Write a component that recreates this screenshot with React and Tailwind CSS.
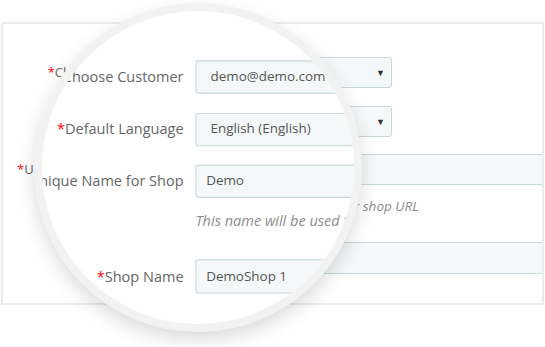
import React from "react";

function Label({ children, ghost }) {
  return (
    <div
      className={`w-[160px] shrink-0 text-right text-[#666] whitespace-nowrap ${
        ghost ? "text-[13.5px]" : "text-[13px]"
      }`}
    >
      <span className="text-[#f00]">*</span>
      {children}
    </div>
  );
}

function Select({ value }) {
  return (
    <div className="ml-[11px] w-[218px] h-full flex items-center justify-between rounded-[3px] border border-[#c8d7dc] bg-[#f5f8f9] pl-[13px] pr-[6px] text-[12.5px] text-[#555]">
      <span className="whitespace-nowrap">{value}</span>
      <span className="text-[9px] text-[#333]">▼</span>
    </div>
  );
}

function Input({ value }) {
  return (
    <div className="ml-[11px] w-[420px] h-full shrink-0 flex items-center rounded-[3px] border border-[#c8d7dc] bg-[#f5f8f9] pl-[9px] text-[12.5px] text-[#555] whitespace-nowrap">
      {value}
    </div>
  );
}

function ShopForm({ ghost }) {
  return (
    <div
      className={`mt-[21px] ml-[1px] w-[543px] h-[283px] border-2 overflow-hidden pt-[33px] ${
        ghost ? "border-transparent" : "border-[#ebebeb]"
      }`}
    >
      <div className="flex items-center h-[31px]">
        <Label ghost={ghost}>Choose Customer</Label>
        <Select value="demo@demo.com" />
      </div>
      <div className="flex items-center h-[31px] mt-[18px]">
        <Label ghost={ghost}>Default Language</Label>
        <Select value="English (English)" />
      </div>
      <div className="flex items-center h-[31px] mt-[17px]">
        <Label ghost={ghost}>Unique Name for Shop</Label>
        <Input value="Demo" />
      </div>
      <p className="ml-[171px] mt-[12px] leading-[18px] text-[13.5px] italic text-[#8c8c8c] whitespace-nowrap">
        This name will be used for your shop URL
      </p>
      <div className="flex items-center h-[32px] mt-[27px]">
        <Label ghost={ghost}>Shop Name</Label>
        <Input value="DemoShop 1" />
      </div>
    </div>
  );
}

export default function App() {
  return (
    <div className="relative w-[545px] h-[347px] overflow-hidden bg-white font-['Open_Sans',sans-serif]">
      <div className="pt-px">
        <ShopForm />
      </div>

      {/* magnifying lens */}
      <div className="absolute left-[34px] top-[3px] w-[328px] h-[329px] rounded-full border-[8px] border-[#f2f2f2] bg-white overflow-hidden shadow-[0_8px_18px_rgba(0,0,0,0.14)]">
        <div className="absolute left-[-42px] top-[-11px] w-[545px] pt-px scale-[1.075] origin-[-111px_13px]">
          <ShopForm ghost />
        </div>
      </div>
    </div>
  );
}
